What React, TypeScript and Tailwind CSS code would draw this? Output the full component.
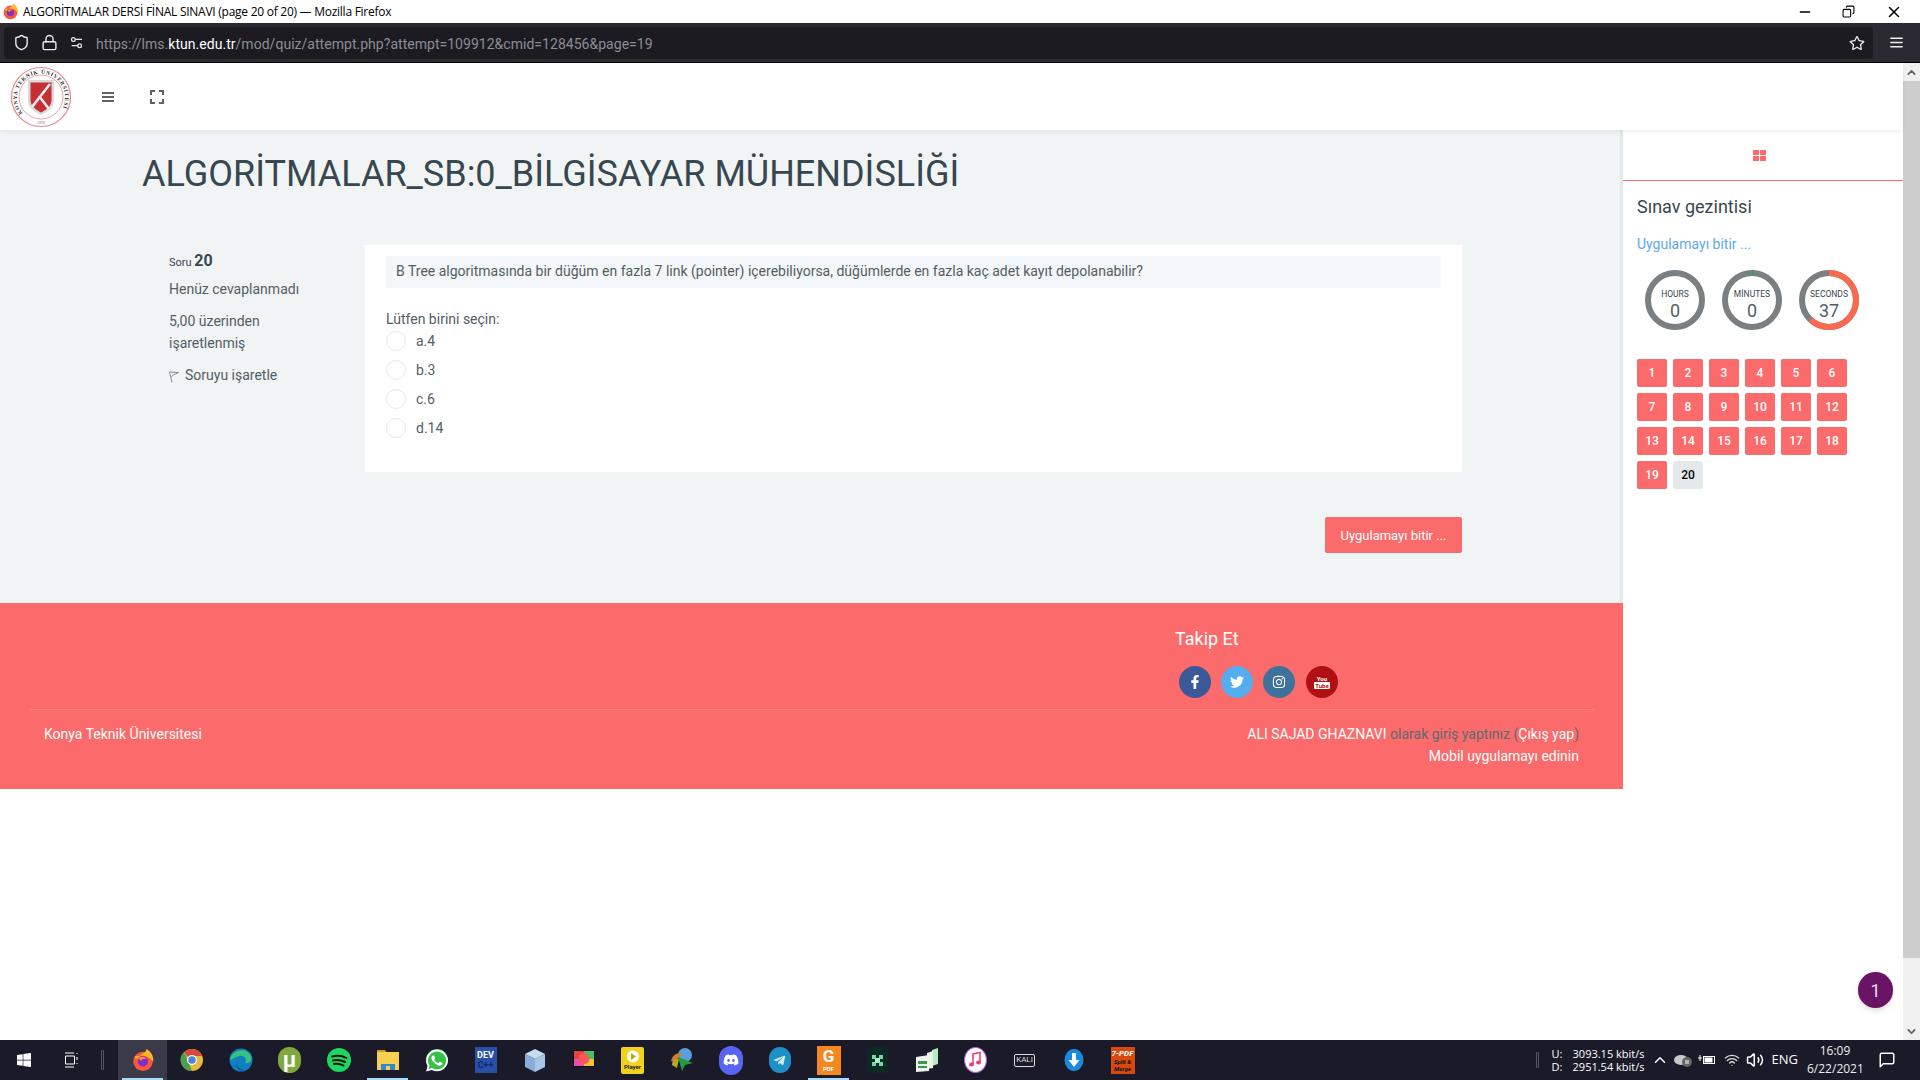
import React from 'react';
import { FaFacebookF, FaTwitter, FaInstagram, FaWhatsapp, FaDiscord, FaTelegramPlane, FaWindows, FaRegStar } from 'react-icons/fa';
import { LuMenu, LuLock, LuShield, LuSettings2, LuMinus, LuCopy, LuX, LuChevronUp, LuChevronDown, LuVolume2, LuWifi, LuMessageSquare } from 'react-icons/lu';

function Firefox({ size = 26 }: { size?: number }) {
  return (
    <svg width={size} height={size} viewBox="0 0 26 26">
      <circle cx="13" cy="14.5" r="10.5" fill="#f9583a" />
      <path d="M4 9C6 15 9 8 13 6 16 4 17 2 16.5 1 21 3 25 8 24 15 19 7 12 8 4 9Z" fill="#ffb627" />
      <circle cx="13" cy="14.5" r="5.5" fill="#7d2fc5" />
      <path d="M8 11C11 9 15 9 17 12 14 11 12 12 11 14Z" fill="#f9883a" />
    </svg>
  );
}

function Logo() {
  return (
    <svg width="62" height="62" viewBox="0 0 62 62">
      <circle cx="31" cy="31" r="29.5" fill="white" stroke="#e58a8e" strokeWidth="1.2" />
      <circle cx="31" cy="31" r="22" fill="white" stroke="#e58a8e" strokeWidth="0.8" />
      <defs>
        <path id="ring" d="M12.500 47A24 24 0 1 1 49.500 47" />
      </defs>
      <text fontFamily="Liberation Serif, serif" fontSize="5.4" fontWeight="700" fill="#2b2b2b" letterSpacing="0.8">
        <textPath href="#ring">KONYA TEKNİK ÜNİVERSİTESİ</textPath>
      </text>
      <text x="31" y="57.500" textAnchor="middle" fontFamily="Liberation Serif, serif" fontSize="4" fill="#666">1970</text>
      <path d="M18 14H44V34C44 42 37 46 31 49 25 46 18 42 18 34Z" fill="#d8d8d8" />
      <path d="M20.500 16.500H41.500V34C41.500 40 36 44 31 46.500 26 44 20.500 40 20.500 34Z" fill="#c62f33" />
      <path d="M22 41 40 18M29 30 39 43" stroke="#ececec" strokeWidth="2.6" fill="none" />
    </svg>
  );
}

function Countdown({ label, value, seconds, color }: { label: string; value: string; seconds: number; color: string }) {
  // r=27 circle, ring is filled clockwise from 12 o'clock
  const c = 2 * Math.PI * 27;
  return (
    <div className="relative w-[60px] h-[60px]">
      <svg width="60" height="60" viewBox="0 0 60 60" className="-rotate-90">
        <circle cx="30" cy="30" r="27" fill="none" stroke="#7b7f82" strokeWidth="6" />
        <circle cx="30" cy="30" r="27" fill="none" stroke={color} strokeWidth="6" strokeDasharray={`${(seconds / 60) * c} ${c}`} />
      </svg>
      <div className="absolute inset-0 flex flex-col items-center pt-[19px]">
        <span className="text-[8.500px] leading-[10px] text-[#37474f]">{label}</span>
        <span className="mt-[2px] text-[18px] leading-[20px] text-[#526069]">{value}</span>
      </div>
    </div>
  );
}

function Social({ bg, children }: { bg: string; children: React.ReactNode }) {
  return (
    <div className="w-8 h-8 rounded-full flex items-center justify-center text-white text-[14px]" style={{ background: bg }}>
      {children}
    </div>
  );
}

const TaskIcons: { key: string; active?: boolean; selected?: boolean; icon: React.ReactNode }[] = [
  { key: 'firefox', active: true, selected: true, icon: <Firefox size={24} /> },
  {
    key: 'chrome',
    icon: (
      <svg width="24" height="24" viewBox="0 0 24 24">
        <circle cx="12" cy="12" r="11" fill="#e8b93a" />
        <path d="M12 1A11 11 0 0 1 22 8H12A4 4 0 0 0 8.500 10L4 4A11 11 0 0 1 12 1Z" fill="#d8483a" />
        <path d="M4 4 8.500 14 12 23A11 11 0 0 1 4 4Z" fill="#4a9e4f" />
        <circle cx="12" cy="12" r="5" fill="white" />
        <circle cx="12" cy="12" r="3.800" fill="#4a86d8" />
      </svg>
    ),
  },
  {
    key: 'edge',
    icon: (
      <svg width="24" height="24" viewBox="0 0 24 24">
        <circle cx="12" cy="12" r="11.500" fill="#0f7ec2" />
        <path d="M1 11C3 2 17-2 22 8 24 13 20 16 16 15 19 11 15 7 10 8 5 9 3 13 1 11Z" fill="#37c37f" />
        <path d="M8 12C6 17 10 22 16 22 11 24 5 20 8 12Z" fill="#0b4f8a" />
      </svg>
    ),
  },
  {
    key: 'utorrent',
    icon: (
      <div className="w-[23px] h-[26px] rounded-full bg-[#7fa83d] flex items-center justify-center text-white text-[22px] leading-none font-bold">µ</div>
    ),
  },
  {
    key: 'spotify',
    icon: (
      <svg width="24" height="24" viewBox="0 0 24 24">
        <circle cx="12" cy="12" r="12" fill="#1ed760" />
        <path d="M5 8.500C10 7 15 7.500 19.500 10M6 12.500C10 11.500 14 12 18 14M7 16C10 15.300 13.500 15.700 16.500 17.500" stroke="#111" strokeWidth="2" fill="none" strokeLinecap="round" />
      </svg>
    ),
  },
  {
    key: 'explorer',
    selected: true,
    icon: (
      <svg width="24" height="22" viewBox="0 0 24 22">
        <path d="M1 1H9L11 4H1Z" fill="#d99a1e" />
        <rect x="1" y="3" width="22" height="18" fill="#f7cf52" />
        <rect x="5" y="15" width="14" height="6" fill="#2f8ad0" />
        <rect x="10" y="17" width="4" height="4" fill="#f7cf52" />
      </svg>
    ),
  },
  {
    key: 'whatsapp',
    icon: (
      <div className="w-[22px] h-[22px] rounded-full bg-[#35c04a] flex items-center justify-center text-white text-[25px]">
        <FaWhatsapp />
      </div>
    ),
  },
  {
    key: 'dev',
    icon: (
      <div className="w-[22px] h-[26px] bg-[#2a4fa8] flex flex-col items-center justify-center text-[9px] leading-[10px] font-bold">
        <span className="text-white">DEV</span>
        <span className="text-[#102a70]">C++</span>
      </div>
    ),
  },
  {
    key: 'box',
    icon: (
      <svg width="22" height="25" viewBox="0 0 22 25">
        <path d="M11 1 21 6 11 11 1 6Z" fill="#c8dcf0" />
        <path d="M1 6 11 11V24L1 19Z" fill="#86aed8" />
        <path d="M21 6 11 11V24L21 19Z" fill="#a7c6e6" />
      </svg>
    ),
  },
  {
    key: 'rec',
    icon: (
      <svg width="24" height="24" viewBox="0 0 24 24">
        <rect x="1" y="2" width="22" height="17" fill="#111" />
        <rect x="2" y="3" width="10" height="8" fill="#e8423f" />
        <rect x="12" y="3" width="10" height="8" fill="#3ec46d" />
        <rect x="2" y="11" width="10" height="7" fill="#e84fb0" />
        <rect x="12" y="11" width="10" height="7" fill="#f2c230" />
        <circle cx="12" cy="10.500" r="5.500" fill="#f35a5a" />
        <rect x="8" y="20" width="8" height="2" fill="#222" />
      </svg>
    ),
  },
  {
    key: 'player',
    icon: (
      <div className="w-[23px] h-[27px] rounded-[2px] bg-[#f3d21c] flex flex-col items-center justify-center">
        <svg width="12" height="13" viewBox="0 0 12 13">
          <circle cx="6" cy="6.500" r="6" fill="white" />
          <path d="M4 3 9 6.500 4 10Z" fill="#d0a000" />
        </svg>
        <span className="text-[6px] leading-[8px] font-bold text-[#222]">Player</span>
      </div>
    ),
  },
  {
    key: 'idm',
    icon: (
      <svg width="26" height="26" viewBox="0 0 26 26">
        <circle cx="16" cy="8" r="7" fill="#5c9fd8" />
        <path d="M2 14C4 7 9 5 13 7L6 15Z" fill="#d87a2a" />
        <path d="M3 18C3 13 6 12 10 12L8 21Z" fill="#b7a82a" />
        <path d="M9 10 24 16 16 18 13 24Z" fill="#1f9e3d" />
      </svg>
    ),
  },
  {
    key: 'discord',
    icon: (
      <div className="w-[24px] h-[29px] rounded-full bg-[#5865f2] flex items-center justify-center text-white text-[16px]">
        <FaDiscord />
      </div>
    ),
  },
  {
    key: 'telegram',
    icon: (
      <div className="w-[22px] h-[26px] rounded-full bg-[#1e90c8] flex items-center justify-center text-[#d8eef8] text-[13px]">
        <FaTelegramPlane />
      </div>
    ),
  },
  {
    key: 'foxit',
    selected: true,
    icon: (
      <div className="w-6 h-[29px] bg-[#f5871f] flex flex-col items-center justify-center text-white font-bold">
        <span className="text-[17px] leading-[17px]">G</span>
        <span className="text-[6px] leading-[7px]">PDF</span>
      </div>
    ),
  },
  {
    key: 'green',
    icon: (
      <div className="w-[21px] h-[26px] rounded-[3px] bg-[#0c2a22] flex items-center justify-center">
        <svg width="13" height="13" viewBox="0 0 13 13">
          <path d="M1 1H5V5H1ZM8 1H12V5H8ZM1 8H5V12H1ZM8 8H12V12H8Z" fill="#6fd8a8" />
          <path d="M4 4H9V9H4Z" fill="#a8f0cc" />
        </svg>
      </div>
    ),
  },
  {
    key: 'cards',
    icon: (
      <svg width="24" height="26" viewBox="0 0 24 26">
        <path d="M17 3 23 1V17L17 19Z" fill="#b8e8c4" />
        <path d="M12 6 18 4V21L12 22Z" fill="#e8f4e8" />
        <path d="M1 10 14 8V24L1 25Z" fill="#f2f2f2" />
        <rect x="3" y="14" width="9" height="3" fill="#3a9a4a" />
        <rect x="3" y="19" width="9" height="2" fill="#3a9a4a" />
      </svg>
    ),
  },
  {
    key: 'itunes',
    icon: (
      <svg width="23" height="26" viewBox="0 0 23 26">
        <ellipse cx="11.500" cy="13" rx="11" ry="12.500" fill="white" />
        <ellipse cx="11.500" cy="13" rx="11" ry="12.500" fill="none" stroke="#b05ad8" strokeWidth="1.200" />
        <path d="M9 17V7L16 5.500V15" stroke="#e8408a" strokeWidth="1.600" fill="none" />
        <ellipse cx="7.500" cy="17.500" rx="2.500" ry="2" fill="#e8408a" />
        <ellipse cx="14.500" cy="15.500" rx="2.500" ry="2" fill="#e8408a" />
      </svg>
    ),
  },
  {
    key: 'kali',
    icon: (
      <div className="w-[21px] h-[13px] border border-[#ddd] rounded-[2px] flex items-center justify-center text-[#ddd] text-[8px] leading-none">KALI</div>
    ),
  },
  {
    key: 'download',
    icon: (
      <svg width="24" height="26" viewBox="0 0 24 26">
        <ellipse cx="12" cy="13" rx="9.500" ry="11" fill="#1a8ae0" />
        <path d="M10 6H14V13H17.500L12 20 6.500 13H10Z" fill="white" />
      </svg>
    ),
  },
  {
    key: '7pdf',
    icon: (
      <div className="w-6 h-[27px] bg-[#d8490f] flex flex-col items-center justify-center text-[6px] leading-[7px] font-bold italic text-white">
        <span className="text-[8px] leading-[9px]">7-PDF</span>
        <span className="text-[#111]">Split &amp;</span>
        <span className="text-[#111]">Merge</span>
      </div>
    ),
  },
];

const soft = 'text-[14px] leading-[22px] text-[#525e66]';

export default function App() {
  const qs = Array.from({ length: 20 }, (_, i) => i + 1);
  return (
    <div className="w-[1920px] h-[1080px] overflow-hidden flex flex-col bg-white font-['Roboto',sans-serif]">
      {/* Window title */}
      <div className="h-[23px] shrink-0 flex items-center bg-white pl-[2px]">
        <Firefox size={17} />
        <span className="ml-[4px] text-[12px] text-black font-['Open_Sans',sans-serif] tracking-[-0.26px]">
          ALGORİTMALAR DERSİ FİNAL SINAVI (page 20 of 20) — Mozilla Firefox
        </span>
        <div className="ml-auto flex items-center text-black text-[16px]">
          <LuMinus className="mr-[29px]" />
          <LuCopy className="mr-[30px] text-[13px] -scale-x-100" />
          <LuX className="mr-[17px] text-[18px]" />
        </div>
      </div>

      {/* Browser toolbar */}
      <div className="h-10 shrink-0 flex items-center bg-[#2b2a33] border-b border-black pl-[4px]">
        <div className="w-[1869px] h-8 rounded-[4px] bg-[#1c1b22] flex items-center text-[#e8e8ea] pl-[9px] pr-[8px]">
          <LuShield className="text-[17px]" />
          <LuLock className="ml-[11px] text-[17px]" />
          <LuSettings2 className="ml-[11px] text-[15px]" />
          <span className="ml-[12px] mt-[4px] text-[14px] text-[#8d8d92] tracking-[0.03px]">
            https://lms.<span className="text-white">ktun.edu.tr</span>/mod/quiz/attempt.php?attempt=109912&amp;cmid=128456&amp;page=19
          </span>
          <FaRegStar className="ml-auto text-[16px]" />
        </div>
        <LuMenu className="ml-[15px] text-[#f0f0f0] text-[17px]" />
      </div>

      <div className="relative flex-1 min-h-0 flex">
        <div className="w-[1903px] flex flex-col">
          {/* Site navbar */}
          <div className="relative z-10 h-[67px] shrink-0 flex items-center bg-white shadow-[0_2px_4px_rgba(0,0,0,0.06)] pl-[10px]">
            <Logo />
            <svg className="ml-[30px]" width="12" height="10" viewBox="0 0 12 10" fill="#616161">
              <rect width="12" height="2" />
              <rect y="4" width="12" height="2" />
              <rect y="8" width="12" height="2" />
            </svg>
            <svg className="ml-[36px]" width="14" height="14" viewBox="0 0 14 14" fill="none" stroke="#616161" strokeWidth="2">
              <path d="M1 5V1H5M9 1H13V5M13 9V13H9M5 13H1V9" />
            </svg>
          </div>

          <div className="flex flex-1 min-h-0">
            <div className="w-[1623px] flex flex-col">
              {/* Quiz page */}
              <div className="h-[473px] shrink-0 bg-[#f1f4f5] border-r-[3px] border-[#e4e8ea] pl-[142px] pt-[19px]">
                <h1 className="text-[36px] leading-[50px] text-[#37474f] mb-[46px]">ALGORİTMALAR_SB:0_BİLGİSAYAR MÜHENDİSLİĞİ</h1>
                <div className="flex ml-[27px]">
                  <div className="w-[196px] pt-[5px]">
                    <div className="text-[11px] leading-[22px] text-[#37474f]">
                      Soru <span className="text-[16px] font-bold">20</span>
                    </div>
                    <div className={`${soft} mt-[4px]`}>Henüz cevaplanmadı</div>
                    <div className={`${soft} mt-[10px] w-[120px]`}>5,00 üzerinden işaretlenmiş</div>
                    <div className={`${soft} mt-[10px] flex items-center`}>
                      <svg className="mr-[6px] mt-[4px]" width="10" height="12" viewBox="0 0 10 12" fill="none" stroke="#888" strokeWidth="1">
                        <path d="M0.500 1 9.500 1.500 4.500 4 2.500 5.500M0.500 1 3 11.500" />
                      </svg>
                      Soruyu işaretle
                    </div>
                  </div>
                  <div className="w-[1097px] h-[227px] bg-white px-[21px] pt-[11px]">
                    <div className="h-8 rounded-[3px] bg-[#f3f7f9] px-[10px] text-[14px] leading-[30px] text-[#525e66]">
                      B Tree algoritmasında bir düğüm en fazla 7 link (pointer) içerebiliyorsa, düğümlerde en fazla kaç adet kayıt depolanabilir?
                    </div>
                    <div className={`${soft} mt-[20px]`}>Lütfen birini seçin:</div>
                    <div className="mt-px flex flex-col gap-[9px]">
                      {['a.4', 'b.3', 'c.6', 'd.14'].map(o => (
                        <div key={o} className="flex items-center h-5">
                          <div className="w-5 h-5 rounded-full border border-[#e4eaec] bg-white" />
                          <span className="ml-[10px] text-[14px] text-[#525e66]">{o}</span>
                        </div>
                      ))}
                    </div>
                  </div>
                </div>
                <div className="w-[1320px] flex justify-end mt-[45px]">
                  <button className="w-[137px] h-9 pt-px rounded-[2px] bg-[#fb6b6b] text-white text-[13px]">Uygulamayı bitir ...</button>
                </div>
              </div>

              {/* Footer */}
              <div className="h-[186px] shrink-0 bg-[#fb6b6b]">
                <div className="pl-[1175px] pt-[23px]">
                  <div className="text-[18px] leading-[26px] text-white">Takip Et</div>
                  <div className="flex gap-[10px] ml-[4px] mt-[14px]">
                    <Social bg="#3b5998"><FaFacebookF /></Social>
                    <Social bg="#55acee"><FaTwitter /></Social>
                    <Social bg="#3f729b"><FaInstagram /></Social>
                    <div className="ml-px">
                      <Social bg="#b00f14">
                        <div className="flex flex-col items-center font-bold text-[6px] leading-[7px]">
                          <span>You</span>
                          <span className="bg-white text-[#b00f14] px-px rounded-[1px]">Tube</span>
                        </div>
                      </Social>
                    </div>
                  </div>
                </div>
                <div className="mx-[30px] mt-[11px] h-px w-[1564px] bg-[#ff8080]" />
                <div className="flex justify-between pl-[44px] pr-[44px] mt-[13px] text-[14px] leading-[22px] text-white">
                  <div>Konya Teknik Üniversitesi</div>
                  <div className="text-right">
                    <div>
                      ALI SAJAD GHAZNAVI <span className="text-[#5e6a72]">olarak giriş yaptınız (</span>Çıkış yap<span className="text-[#5e6a72]">)</span>
                    </div>
                    <div>Mobil uygulamayı edinin</div>
                  </div>
                </div>
              </div>
            </div>

            {/* Quiz navigation */}
            <div className="w-[280px] flex flex-col bg-white">
              <div className="h-[51px] shrink-0 border-b border-[#fb6b6b] flex items-center justify-center pr-[7px]">
                <div className="grid grid-cols-2 gap-px w-[13px] h-[11px]">
                  <div className="bg-[#fb6b6b]" />
                  <div className="bg-[#fb6b6b]" />
                  <div className="bg-[#fb6b6b]" />
                  <div className="bg-[#fb6b6b]" />
                </div>
              </div>
              <div className="pl-[14px]">
                <div className="mt-[13px] text-[18px] leading-[26px] text-[#37474f]">Sınav gezintisi</div>
                <div className="mt-[13px] text-[14px] leading-[22px] text-[#62a8ea]">Uygulamayı bitir ...</div>
                <div className="mt-[15px] ml-[8px] flex gap-[17px]">
                  <Countdown label="HOURS" value="0" seconds={0.3} color="#3f8fc0" />
                  <Countdown label="MİNUTES" value="0" seconds={0.6} color="#1fa85f" />
                  <Countdown label="SECONDS" value="37" seconds={37} color="#f96a50" />
                </div>
                <div className="mt-[29px] grid grid-cols-[repeat(6,30px)] gap-x-[6px] gap-y-[6px]">
                  {qs.map(n => (
                    <div
                      key={n}
                      className={`h-[28px] rounded-[2px] flex items-center justify-center text-[12px] font-medium ${n === 20 ? 'bg-[#e4eaec] text-black' : 'bg-[#fb6b6b] text-white'}`}
                    >
                      {n}
                    </div>
                  ))}
                </div>
              </div>
            </div>
          </div>
        </div>

        {/* Page scrollbar */}
        <div className="w-[17px] flex flex-col bg-[#f0f0f0] text-[#606060]">
          <div className="h-[18px] flex items-center justify-center text-[13px]"><LuChevronUp strokeWidth={3} /></div>
          <div className="h-[877px] bg-[#cdcdcd]" />
          <div className="mt-auto h-[18px] flex items-center justify-center text-[13px]"><LuChevronDown strokeWidth={3} /></div>
        </div>

        <div className="absolute left-[1858px] top-[909px] w-[35px] h-[36px] rounded-full bg-[#6a1465] shadow-md flex items-center justify-center text-[#e8dce8] text-[18px]">
          1
        </div>
      </div>

      {/* Windows taskbar */}
      <div className="h-10 shrink-0 bg-[#1a1a28] flex items-center text-white">
        <div className="w-12 flex justify-center text-[16px]"><FaWindows /></div>
        <div className="w-12 flex justify-center">
          <svg width="14" height="16" viewBox="0 0 14 16" fill="none" stroke="white" strokeWidth="1">
            <path d="M0 1H9M0 15H9M0.500 4H9.500V12H0.500ZM12 1V2M12 5V8M12 11V12" />
          </svg>
        </div>
        <div className="w-[3px] h-5 ml-[5px] mr-[14px] border-x border-[#55555f]" />
        {TaskIcons.map(t => (
          <div
            key={t.key}
            className={`relative w-[49px] h-10 flex items-center justify-center ${t.active ? 'bg-[#3b3a48]' : ''}`}
          >
            {t.icon}
            {t.selected && <div className="absolute left-1 right-1 bottom-0 h-[2px] bg-[#a5dcf8]" />}
          </div>
        ))}
        <div className="ml-auto flex items-center">
          <div className="w-[3px] h-4 border-x border-[#55555f] mr-[13px]" />
          <div className="flex flex-col text-[11px] leading-[13px] w-[93px] font-['Open_Sans',sans-serif]">
            <div className="flex justify-between"><span>U:</span><span>3093.15 kbit/s</span></div>
            <div className="flex justify-between"><span>D:</span><span>2951.54 kbit/s</span></div>
          </div>
          <LuChevronUp className="ml-[6px] text-[18px]" />
          <svg className="ml-[4px]" width="20" height="14" viewBox="0 0 20 14">
            <ellipse cx="8" cy="7" rx="7" ry="5" fill="#c8c8c8" />
            <circle cx="14" cy="9" r="5" fill="#666" />
            <path d="M13 7V11M15 7V11" stroke="white" />
          </svg>
          <svg className="ml-[5px]" width="18" height="12" viewBox="0 0 18 12" fill="none" stroke="white">
            <rect x="5.500" y="2.500" width="11" height="7" />
            <rect x="6.500" y="3.500" width="8" height="5" fill="white" stroke="none" />
            <path d="M0 4H4M2 1V7" />
          </svg>
          <LuWifi className="ml-[8px] text-[16px] text-[#ddd]" />
          <LuVolume2 className="ml-[6px] text-[18px]" />
          <span className="ml-[8px] text-[13px] font-['Open_Sans',sans-serif]">ENG</span>
          <div className="ml-[9px] w-[56px] text-center text-[12px] leading-[18px] text-[#eee] font-['Open_Sans',sans-serif]">
            <div>16:09</div>
            <div>6/22/2021</div>
          </div>
          <LuMessageSquare className="ml-[15px] mr-[24px] text-[18px]" />
        </div>
      </div>
    </div>
  );
}
